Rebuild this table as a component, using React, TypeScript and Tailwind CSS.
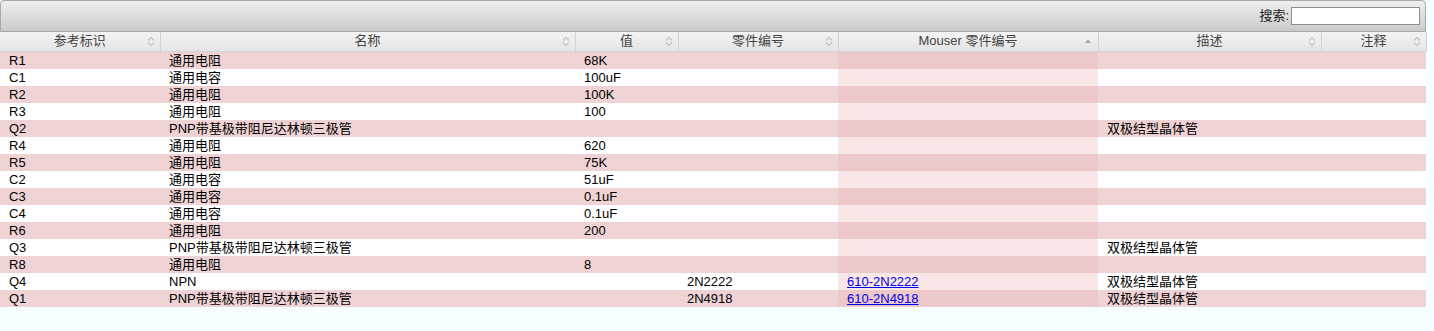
import React from 'react';

type Row = {
    ref: string;
    name: string;
    value: string;
    part: string;
    mouser: string;
    desc: string;
    note: string;
};

const ROWS: Row[] = [
    { ref: 'R1', name: '通用电阻', value: '68K', part: '', mouser: '', desc: '', note: '' },
    { ref: 'C1', name: '通用电容', value: '100uF', part: '', mouser: '', desc: '', note: '' },
    { ref: 'R2', name: '通用电阻', value: '100K', part: '', mouser: '', desc: '', note: '' },
    { ref: 'R3', name: '通用电阻', value: '100', part: '', mouser: '', desc: '', note: '' },
    { ref: 'Q2', name: 'PNP带基极带阻尼达林顿三极管', value: '', part: '', mouser: '', desc: '双极结型晶体管', note: '' },
    { ref: 'R4', name: '通用电阻', value: '620', part: '', mouser: '', desc: '', note: '' },
    { ref: 'R5', name: '通用电阻', value: '75K', part: '', mouser: '', desc: '', note: '' },
    { ref: 'C2', name: '通用电容', value: '51uF', part: '', mouser: '', desc: '', note: '' },
    { ref: 'C3', name: '通用电容', value: '0.1uF', part: '', mouser: '', desc: '', note: '' },
    { ref: 'C4', name: '通用电容', value: '0.1uF', part: '', mouser: '', desc: '', note: '' },
    { ref: 'R6', name: '通用电阻', value: '200', part: '', mouser: '', desc: '', note: '' },
    { ref: 'Q3', name: 'PNP带基极带阻尼达林顿三极管', value: '', part: '', mouser: '', desc: '双极结型晶体管', note: '' },
    { ref: 'R8', name: '通用电阻', value: '8', part: '', mouser: '', desc: '', note: '' },
    { ref: 'Q4', name: 'NPN', value: '', part: '2N2222', mouser: '610-2N2222', desc: '双极结型晶体管', note: '' },
    { ref: 'Q1', name: 'PNP带基极带阻尼达林顿三极管', value: '', part: '2N4918', mouser: '610-2N4918', desc: '双极结型晶体管', note: '' },
];

const COLUMNS = [
    { title: '参考标识', width: 'w-[160px]' },
    { title: '名称', width: 'w-[415px]' },
    { title: '值', width: 'w-[103px]' },
    { title: '零件编号', width: 'w-[160px]' },
    { title: 'Mouser 零件编号', width: 'w-[260px]', sorted: true },
    { title: '描述', width: 'w-[223px]' },
    { title: '注释', width: 'w-[105px]' },
];

// 上下双箭头 (未排序)
const SortBoth = () => (
    <svg width="8" height="11" viewBox="0 0 8 11" className="absolute right-[5px] top-[4px]">
        <path d="M1 4.5 L4 1.5 L7 4.5" fill="none" stroke="#c4c4c4" strokeWidth="1.2" />
        <path d="M1 6.5 L4 9.5 L7 6.5" fill="none" stroke="#c4c4c4" strokeWidth="1.2" />
    </svg>
);

// 已排序 (升序)
const SortAsc = () => (
    <svg width="8" height="11" viewBox="0 0 8 11" className="absolute right-[6px] top-[4px]">
        <path d="M1 7 L4 3.5 L7 7 Z" fill="#a8a8a8" />
    </svg>
);

const App: React.FC = () => {
    return (
        <div className="min-h-[331px] w-full bg-[#f5ffff] font-['Liberation_Sans','Noto_Sans_CJK_SC',sans-serif] text-[13px] text-black">
            <div className="w-[1426px]">
                {/* toolbar */}
                <div className="h-[32px] border border-[#a8a8a8] rounded-t-[4px] bg-gradient-to-b from-[#efefef] to-[#cbcbcb] flex items-center justify-end pr-[5px]">
                    <span className="text-[13px] text-[#222] mr-[2px]">搜索:</span>
                    <input type="text" className="w-[129px] h-[18px] bg-white border border-[#8f8f8f] outline-none" />
                </div>

                <table className="table-fixed border-collapse w-[1426px]">
                    <colgroup>
                        {COLUMNS.map(c => <col key={c.title} className={c.width} />)}
                    </colgroup>
                    <thead>
                        <tr>
                            {COLUMNS.map(c => (
                                <th
                                    key={c.title}
                                    className="relative h-[19px] p-0 font-normal text-[13px] leading-[18px] text-[#444] text-center border-r border-b border-[#d3d3d3] bg-gradient-to-b from-[#f3f3f3] via-[#ececec] to-[#e4e4e4]"
                                >
                                    {c.title}
                                    {c.sorted ? <SortAsc /> : <SortBoth />}
                                </th>
                            ))}
                        </tr>
                    </thead>
                    <tbody>
                        {ROWS.map((r, i) => {
                            const odd = i % 2 === 0;
                            const base = odd ? 'bg-[#efd3d4]' : 'bg-white';
                            const sorted = odd ? 'bg-[#ecc9c8]' : 'bg-[#f9e7e7]';
                            const cell = 'h-[17px] p-0 pl-[9px] leading-[17px] whitespace-nowrap';
                            return (
                                <tr key={r.ref} className={base}>
                                    <td className={cell}>{r.ref}</td>
                                    <td className={cell}>{r.name}</td>
                                    <td className={cell}>{r.value}</td>
                                    <td className={cell}>{r.part}</td>
                                    <td className={`${cell} ${sorted}`}>
                                        {r.mouser && <a href="#" className="text-[#0000ee] underline">{r.mouser}</a>}
                                    </td>
                                    <td className={cell}>{r.desc}</td>
                                    <td className={cell}>{r.note}</td>
                                </tr>
                            );
                        })}
                    </tbody>
                </table>
            </div>
        </div>
    );
};

export default App;
